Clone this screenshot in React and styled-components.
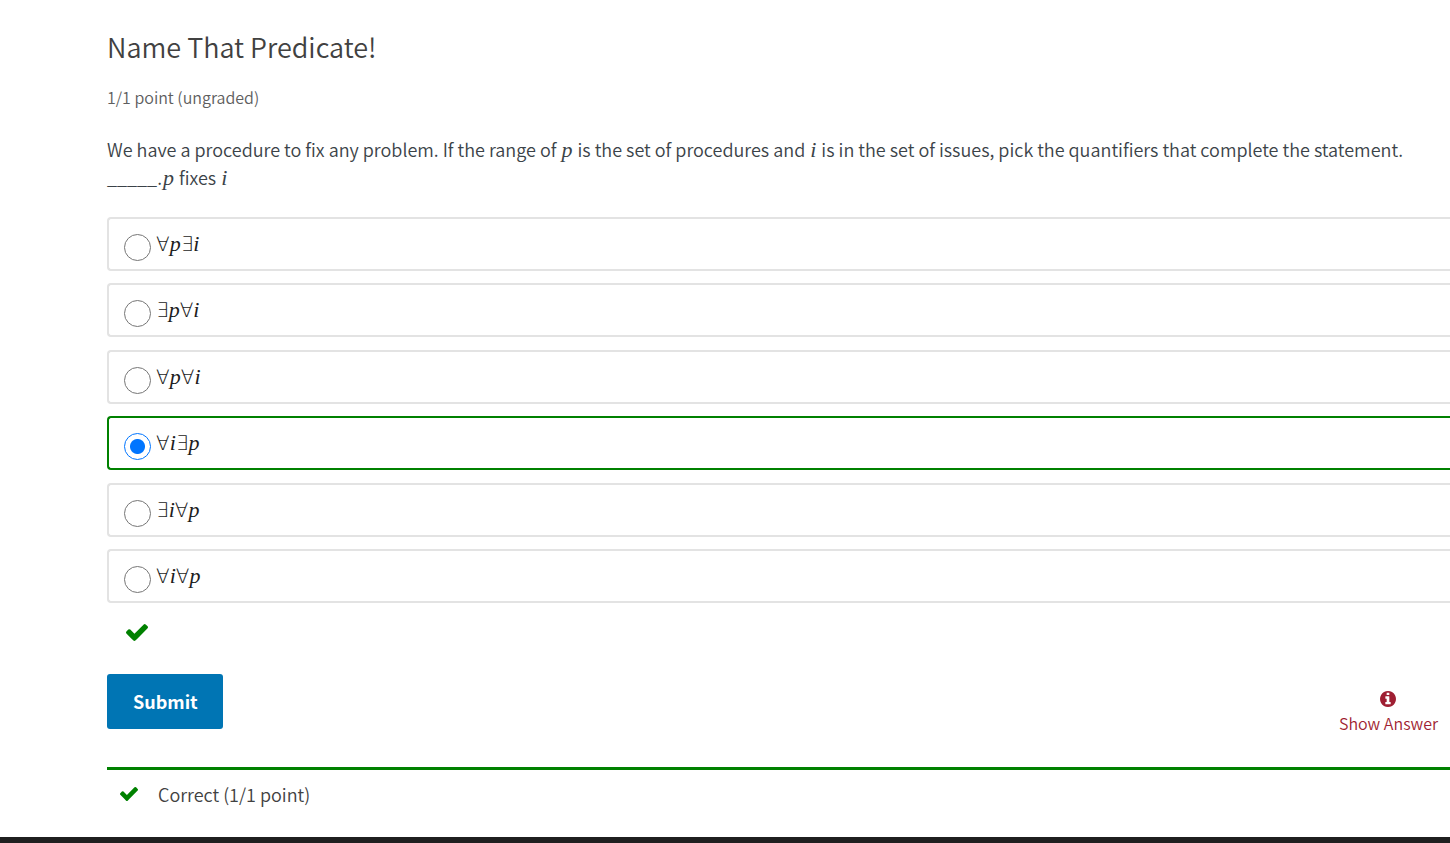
import React, { useState } from "react";
import styled, { createGlobalStyle } from "styled-components";

const GlobalStyle = createGlobalStyle`
  * { box-sizing: border-box; }
  body {
    margin: 0;
    background: #fff;
    color: #414141;
    font-family: "Noto Sans CJK SC", "Open Sans", sans-serif;
    font-size: 18px;
    font-weight: 350;
  }
`;

const Page = styled.div`
  display: flex;
  flex-direction: column;
  min-height: 100vh;
`;

const Problem = styled.main`
  flex: 1;
  padding: 27px 0 0 107px;
`;

const Title = styled.h1`
  margin: 0;
  color: #414141;
  font-size: 27px;
  font-weight: 350;
  line-height: 40px;
`;

const Progress = styled.p`
  margin: 20px 0 0;
  color: #5e5e5e;
  font-size: 16px;
  line-height: 20px;
`;

const Question = styled.p`
  margin: 28px 0 0;
  color: #3b4348;
  line-height: 28px;
`;

const Choices = styled.fieldset`
  margin: 26px 0 0;
  padding: 0;
  border: 0;
`;

const ChoiceList = styled.div`
  display: flex;
  flex-direction: column;
  justify-content: space-between;
  min-height: 386px;
`;

const Choice = styled.label`
  display: flex;
  align-items: center;
  gap: 5px;
  height: 54px;
  padding-left: 15px;
  border: 2px solid ${(p) => (p.$correct ? "#008100" : "#e3e3e3")};
  border-right: 0;
  border-radius: 4px 0 0 4px;
  cursor: pointer;
`;

const Radio = styled.input`
  appearance: none;
  width: 27px;
  height: 27px;
  margin: 7px 0 0;
  border: 1px solid #767676;
  border-radius: 50%;
  background: #fff;

  &:checked {
    border-color: #0075ff;
    background: radial-gradient(circle, #0075ff 7px, #fff 8px);
  }
`;

const Formula = styled.span`
  color: #1c1c1c;
  font-family: "DejaVu Sans", sans-serif;
  font-size: 20px;
  font-weight: 200;
  line-height: 28px;
  white-space: nowrap;
`;

const Variable = styled.i`
  font-family: "Liberation Serif", serif;
  font-size: 22px;
  font-weight: 400;
  line-height: 20px;

  ${Question} & { margin: 0 1px; }
`;

const Status = styled.div`
  display: flex;
  padding: 21px 0 0 19px;
  color: #008100;
`;

const Actions = styled.div`
  display: flex;
  align-items: flex-start;
  justify-content: space-between;
  margin-top: 33px;
  padding-right: 12px;
`;

const Submit = styled.button`
  height: 55px;
  padding: 0 25px 2px 26px;
  border: 0;
  border-radius: 3px;
  background: #0075b4;
  color: #fff;
  font: inherit;
  font-weight: 700;
`;

const ShowAnswer = styled.button`
  display: flex;
  flex-direction: column;
  align-items: center;
  gap: 6px;
  margin-top: 17px;
  padding: 0;
  border: 0;
  background: none;
  color: #9f1f33;
  font: inherit;
  font-size: 16px;
  line-height: 20px;
`;

const Notification = styled.div`
  display: flex;
  align-items: center;
  gap: 20px;
  margin-top: 34px;
  padding: 10px 0 0 13px;
  border-top: 3px solid #008100;
  color: #414141;
  line-height: 28px;

  svg { color: #008100; }
`;

const Footer = styled.footer`
  height: 6px;
  background: #1f1f1f;
`;

function Check({ width, height }) {
  return (
    <svg width={width} height={height} viewBox="121 334 1550 1188" preserveAspectRatio="none" fill="currentColor" aria-hidden="true">
      <path d="M1671 566q0 40-28 68l-724 724-136 136q-28 28-68 28t-68-28l-136-136-362-362q-28-28-28-68t28-68l136-136q28-28 68-28t68 28l294 295 656-657q28-28 68-28t68 28l136 136q28 28 28 68z" />
    </svg>
  );
}

function Info() {
  return (
    <svg width="16" height="16" viewBox="128 128 1536 1536" fill="currentColor" aria-hidden="true">
      <path d="M1152 1376v-160q0-14-9-23t-23-9h-96v-512q0-14-9-23t-23-9h-320q-14 0-23 9t-9 23v160q0 14 9 23t23 9h96v320h-96q-14 0-23 9t-9 23v160q0 14 9 23t23 9h448q14 0 23-9t9-23zm-128-896v-160q0-14-9-23t-23-9h-192q-14 0-23 9t-9 23v160q0 14 9 23t23 9h192q14 0 23-9t9-23zm640 416q0 209-103 385.500t-279.500 279.500-385.500 103-385.500-103-279.500-279.500-103-385.500 103-385.500 279.500-279.500 385.500-103 385.500 103 279.500 279.500 103 385.500z" />
    </svg>
  );
}

const options = ["∀p∃i", "∃p∀i", "∀p∀i", "∀i∃p", "∃i∀p", "∀i∀p"];
const answer = "∀i∃p";

export default function App() {
  const [selected, setSelected] = useState(answer);
  return (
    <Page>
      <GlobalStyle />
      <Problem>
        <Title>Name That Predicate!</Title>
        <Progress>1/1 point (ungraded)</Progress>
        <Question>
          We have a procedure to fix any problem. If the range of <Variable>p</Variable> is the set of procedures and{" "}
          <Variable>i</Variable> is in the set of issues, pick the quantifiers that complete the statement.
          <br />
          _____.<Variable>p</Variable> fixes <Variable>i</Variable>
        </Question>
        <Choices aria-label="Quantifiers">
          <ChoiceList>
            {options.map((option) => (
              <Choice key={option} $correct={option === answer}>
                <Radio type="radio" name="quantifiers" checked={selected === option} onChange={() => setSelected(option)} />
                <Formula>
                  {[...option].map((c, n) => (/[pi]/.test(c) ? <Variable key={n}>{c}</Variable> : c))}
                </Formula>
              </Choice>
            ))}
          </ChoiceList>
        </Choices>
        <Status role="img" aria-label="Correct">
          <Check width={22} height={17} />
        </Status>
        <Actions>
          <Submit type="button">Submit</Submit>
          <ShowAnswer type="button">
            <Info />
            Show Answer
          </ShowAnswer>
        </Actions>
        <Notification role="status">
          <Check width={18} height={14} />
          Correct (1/1 point)
        </Notification>
      </Problem>
      <Footer />
    </Page>
  );
}
